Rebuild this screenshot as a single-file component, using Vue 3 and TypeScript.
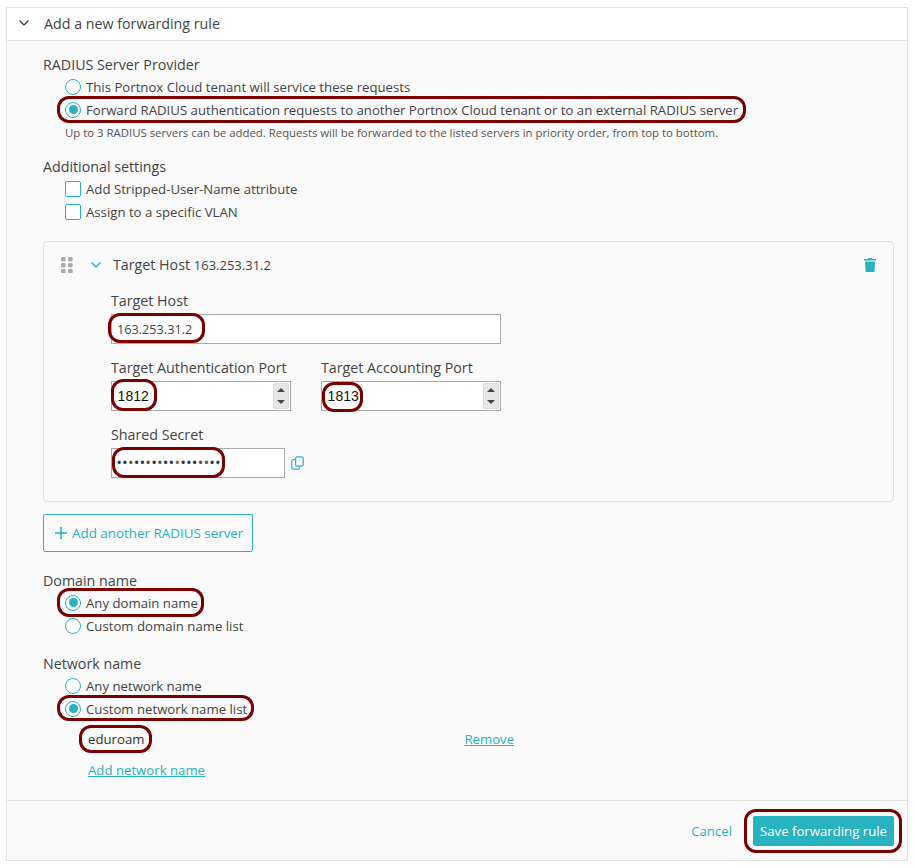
<script setup lang="ts">
const dotColors: string[] = ['#27406b', '#333', '#7a5a2a', '#333', '#27406b', '#7a3a3a', '#333', '#2a6a6a', '#333', '#27406b', '#8a6a2a', '#333', '#27406b', '#333', '#7a3a3a', '#2a6a6a', '#333', '#27406b']
</script>

<template>
  <div class="page">
    <section class="panel">
      <header class="head">
        <svg class="head-chev" width="12" height="8" viewBox="0 0 12 8"><path d="M1.5 1.5 6 6l4.5-4.5" fill="none" stroke="#444" stroke-width="1.4" /></svg>
        <span>Add a new forwarding rule</span>
      </header>

      <div class="body">
        <h4 class="group-title">RADIUS Server Provider</h4>
        <div class="opts">
          <label class="opt"><span class="radio"></span>This Portnox Cloud tenant will service these requests</label>
          <label class="opt hl hl-opt"><span class="radio on"></span>Forward RADIUS authentication requests to another Portnox Cloud tenant or to an external RADIUS server</label>
        </div>
        <p class="help">Up to 3 RADIUS servers can be added. Requests will be forwarded to the listed servers in priority order, from top to bottom.</p>

        <h4 class="group-title settings">Additional settings</h4>
        <div class="opts">
          <label class="opt"><span class="check"></span>Add Stripped-User-Name attribute</label>
          <label class="opt"><span class="check"></span>Assign to a specific VLAN</label>
        </div>

        <div class="card">
          <div class="card-head">
            <svg class="grip" width="12" height="16" viewBox="0 0 12 16" fill="#aaa">
              <rect x="0" y="0" width="4.6" height="4.4" rx="1.4" /><rect x="7" y="0" width="4.6" height="4.4" rx="1.4" />
              <rect x="0" y="6" width="4.6" height="4.4" rx="1.4" /><rect x="7" y="6" width="4.6" height="4.4" rx="1.4" />
              <rect x="0" y="12" width="4.6" height="4.4" rx="1.4" /><rect x="7" y="12" width="4.6" height="4.4" rx="1.4" />
            </svg>
            <svg class="card-chev" width="12" height="8" viewBox="0 0 12 8"><path d="M1.5 1.5 6 6l4.5-4.5" fill="none" stroke="#29b2c0" stroke-width="1.5" /></svg>
            <span class="card-title">Target Host <span class="card-sub">163.253.31.2</span></span>
            <svg class="trash" width="12" height="14" viewBox="0 0 12 14" fill="#29b2c0">
              <path d="M4.3 0h3.4l.5 1H12v1.4H0V1h3.8z" /><path d="M1 3.4h10l-.5 10a.7.7 0 0 1-.7.6H2.2a.7.7 0 0 1-.7-.6z" />
            </svg>
          </div>

          <div class="fields">
            <div class="field">
              <label class="lbl">Target Host</label>
              <div class="box host hl hl-host"><span class="val">163.253.31.2</span></div>
            </div>
            <div class="ports">
              <div class="field">
                <label class="lbl">Target Authentication Port</label>
                <div class="box port hl hl-port">
                  <span class="num">1812</span>
                  <span class="spin"><i class="up"></i><i class="down"></i></span>
                </div>
              </div>
              <div class="field">
                <label class="lbl">Target Accounting Port</label>
                <div class="box port hl hl-port2">
                  <span class="num">1813</span>
                  <span class="spin"><i class="up"></i><i class="down"></i></span>
                </div>
              </div>
            </div>
            <div class="field">
              <label class="lbl">Shared Secret</label>
              <div class="secret-row">
                <div class="box secret hl hl-secret">
                  <span class="dots"><span v-for="(c, i) in dotColors" :key="i" :style="{ color: c }">•</span></span>
                </div>
                <svg class="copy" width="13" height="14" viewBox="0 0 13 14" fill="none" stroke="#29b2c0" stroke-width="1.2">
                  <rect x="4.6" y="0.8" width="7.6" height="9.4" rx="1.6" />
                  <path d="M4 3.6H2.4A1.6 1.6 0 0 0 .8 5.2v6.4a1.6 1.6 0 0 0 1.6 1.6h4.4a1.6 1.6 0 0 0 1.6-1.6v-1" />
                </svg>
              </div>
            </div>
          </div>
        </div>

        <button class="add-btn" type="button">
          <svg width="12" height="12" viewBox="0 0 12 12"><path d="M6 0v12M0 6h12" stroke="#29b2c0" stroke-width="1.6" fill="none" /></svg>
          <span>Add another RADIUS server</span>
        </button>

        <h4 class="group-title domain">Domain name</h4>
        <div class="opts">
          <label class="opt hl hl-any"><span class="radio on"></span>Any domain name</label>
          <label class="opt"><span class="radio"></span>Custom domain name list</label>
        </div>

        <h4 class="group-title network">Network name</h4>
        <div class="opts">
          <label class="opt"><span class="radio"></span>Any network name</label>
          <label class="opt hl hl-custom"><span class="radio on"></span>Custom network name list</label>
        </div>

        <div class="net-row">
          <span class="net-name hl hl-edu">eduroam</span>
          <a class="link remove">Remove</a>
        </div>
        <a class="link add-net">Add network name</a>
      </div>

      <footer class="foot">
        <a class="cancel">Cancel</a>
        <button class="save hl hl-save" type="button">Save forwarding rule</button>
      </footer>
    </section>
  </div>
</template>

<style>
html, body { margin: 0; background: #fff; }
</style>

<style scoped>
.page {
  width: 915px;
  height: 868px;
  box-sizing: border-box;
  padding: 7px 7px 7px 6px;
  font-family: "Open Sans", "Liberation Sans", sans-serif;
  font-size: 13.2px;
  color: #444;
  background: #fff;
}
.panel {
  height: 854px;
  box-sizing: border-box;
  border: 1px solid #e2e2e2;
  background: #fafafa;
  display: flex;
  flex-direction: column;
}
.head {
  height: 33px;
  box-sizing: border-box;
  background: #fff;
  border-bottom: 1px solid #e2e2e2;
  display: flex;
  align-items: center;
  padding: 0 0 2px 11px;
  font-size: 14.25px;
}
.head-chev { margin-right: 14px; }
.body { flex: 1; padding: 14px 13px 0 36px; }
.group-title {
  margin: 0;
  font-size: 14.25px;
  font-weight: 400;
  line-height: 20px;
}
.opts { display: flex; flex-direction: column; padding-left: 22px; }
.opt {
  position: relative;
  display: flex;
  align-items: center;
  height: 23px;
  font-size: 13.2px;
  width: max-content;
}
.radio, .check {
  width: 14px;
  height: 14px;
  border: 1px solid #29b2c0;
  background: #fff;
  margin-right: 5px;
  box-sizing: content-box;
  flex: none;
  position: relative;
}
.radio { border-radius: 50%; }
.check { border-radius: 2px; }
.radio.on::after {
  content: "";
  position: absolute;
  inset: 2.5px;
  border-radius: 50%;
  background: #29b2c0;
}
.help {
  margin: 4px 0 0 22px;
  font-size: 11.38px;
  line-height: 15px;
  color: #555;
}
.settings { margin-top: 17px; }
.card {
  margin-top: 18px;
  width: 851px;
  height: 261px;
  box-sizing: border-box;
  border: 1px solid #e2e2e2;
  border-radius: 4px;
  background: #fafafa;
  padding: 15px 16px 0 17px;
}
.card-head { display: flex; align-items: center; height: 16px; }
.grip { flex: none; }
.card-chev { margin-left: 17px; }
.card-title { margin: -2px 0 0 11px; font-size: 14.25px; }
.card-sub { font-size: 13px; }
.trash { margin-left: auto; margin-right: 1px; }
.fields { margin: 18px 0 0 50px; display: flex; flex-direction: column; gap: 14px; }
.field { display: flex; flex-direction: column; }
.lbl { font-size: 14.25px; line-height: 20px; height: 23px; }
.ports { display: flex; gap: 30px; }
.box {
  position: relative;
  box-sizing: border-box;
  height: 30px;
  border: 1px solid #a9a9a9;
  background: #fff;
  display: flex;
  align-items: center;
  padding-left: 5px;
}
.host { width: 390px; }
.port { width: 180px; }
.secret { width: 174px; }
.val { font-size: 12.7px; }
.num { font-family: "Liberation Sans", Arial, sans-serif; font-size: 14px; color: #111; margin-left: 0.6px; }
.spin {
  position: absolute;
  right: 1px;
  top: 1px;
  bottom: 1px;
  width: 16px;
  background: #e6e6e6;
  border: 1px solid #dcdcdc;
  border-radius: 2px;
  box-sizing: border-box;
  display: flex;
  flex-direction: column;
  align-items: center;
  justify-content: center;
  gap: 8px;
}
.spin i { width: 0; height: 0; border-left: 4px solid transparent; border-right: 4px solid transparent; }
.spin .up { border-bottom: 4px solid #444; }
.spin .down { border-top: 4px solid #444; }
.secret-row { display: flex; align-items: center; }
.dots { font-family: "Liberation Sans", Arial, sans-serif; font-size: 12px; letter-spacing: 1.6px; display: inline-flex; line-height: 1; }
.copy { margin-left: 6px; }
.add-btn {
  display: flex;
  align-items: center;
  gap: 5px;
  margin-top: 12px;
  width: 210px;
  height: 38px;
  border: 1px solid #29b2c0;
  border-radius: 2px;
  background: transparent;
  color: #29b2c0;
  font-family: inherit;
  font-size: 13.4px;
  padding: 0 0 0 11px;
  white-space: nowrap;
}
.domain { margin-top: 19px; }
.network { margin-top: 17px; }
.net-row { display: flex; margin: 8px 0 0 45px; height: 22px; align-items: center; font-size: 13.2px; }
.net-name { position: relative; color: #333; font-size: 13.2px; }
.remove { margin-left: 320px; }
.link { color: #29b2c0; text-decoration: underline; font-size: 13.2px; }
.add-net { display: block; margin: 11px 0 0 45px; line-height: 18px; }
.foot {
  height: 60px;
  box-sizing: border-box;
  border-top: 1px solid #e2e2e2;
  display: flex;
  justify-content: flex-end;
  align-items: center;
  padding-right: 13px;
}
.cancel { color: #29b2c0; font-size: 13.2px; margin-right: 21px; }
.save {
  position: relative;
  width: 141px;
  height: 30px;
  border: 0;
  border-radius: 2px;
  background: #29b2c0;
  color: #fff;
  font-family: inherit;
  font-size: 13.2px;
  padding: 0;
  white-space: nowrap;
}
.hl::after {
  content: "";
  position: absolute;
  border: 3px solid #7b0000;
  border-radius: 12px;
  box-sizing: border-box;
  pointer-events: none;
}
.hl-opt::after { left: -8px; right: -8px; top: -2px; bottom: -2px; }
.hl-any::after { left: -8px; right: -6px; top: -3px; bottom: -3px; }
.hl-custom::after { left: -8px; right: -7px; top: -2px; bottom: -1px; }
.hl-host::after { left: -4px; top: -2px; width: 97px; height: 30px; }
.hl-port::after { left: -1px; top: -3px; width: 46px; height: 32px; }
.hl-port2::after { left: 0; top: 0; width: 41px; height: 30px; }
.hl-secret::after { left: 0; top: -2px; width: 113px; height: 31px; }
.hl-edu::after { left: -9px; right: -8px; top: -5px; bottom: -5px; }
.hl-save::after { left: -9px; right: -8px; top: -7px; bottom: -7px; }
</style>
